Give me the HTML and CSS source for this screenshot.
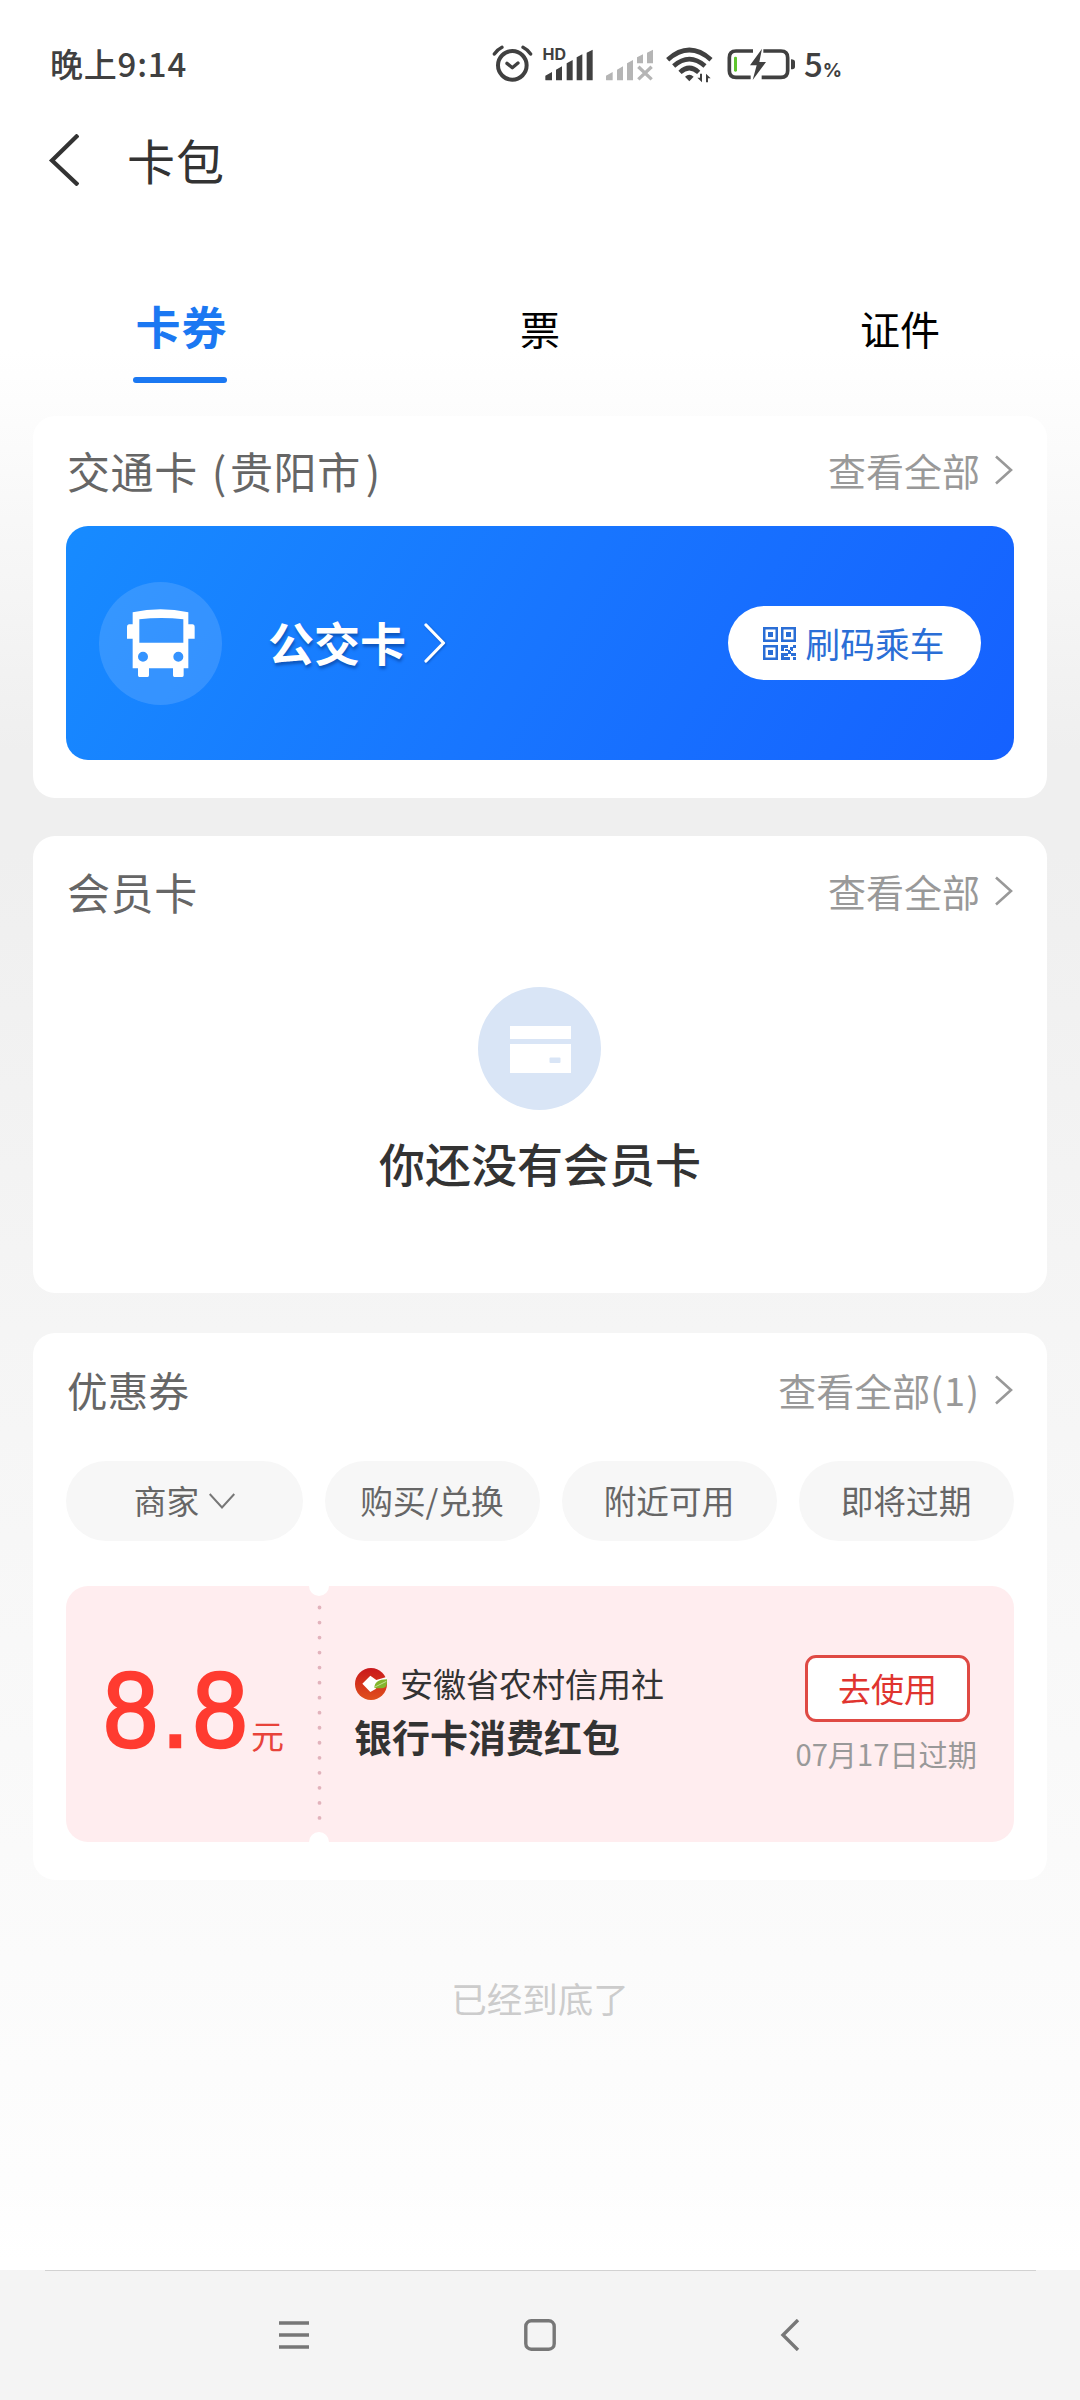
FILE: index.html
```html
<!DOCTYPE html>
<html lang="zh-CN">
<head>
<meta charset="utf-8">
<title>卡包</title>
<link rel="stylesheet" href="styles.css">
</head>
<body>
<div class="screen">
  <header class="status">
    <span class="status-time">晚上9:14</span>
    <svg class="ic-alarm" viewBox="66 72 124 116" width="41.3" height="38.7" fill="none" stroke="#404040" stroke-linecap="round">
      <circle cx="127" cy="136" r="43" stroke-width="12"/>
      <path d="M111 130l16 13 17-14" stroke-width="10" stroke-linejoin="round"/>
      <path d="M73 102Q82 89 96 82M182 102Q173 89 159 82" stroke-width="10"/>
    </svg>
    <span class="signal">
      <span class="hd">HD</span>
      <svg viewBox="222 86 150 98" width="50" height="32.7" fill="#404040">
        <path d="M226 166l20-11v25h-18q-2 0-2-2zM258 148l18-10v42h-18zM290 129l18-10v61h-18zM320 111l17-9v78h-17zM350 97l18-9v92h-18z"/>
      </svg>
    </span>
    <svg class="ic-nosim" viewBox="404 86 150 98" width="50" height="32.7" fill="#b5b5b5">
      <path d="M407 166l20-11v25h-18q-2 0-2-2zM440 148l18-10v42h-18zM470 129l18-10v61h-18zM500 111l18-9v27h-18zM530 97l18-9v41h-18z"/>
      <path d="M504 139l40 38M544 139l-40 38" stroke="#b5b5b5" stroke-width="10"/>
    </svg>
    <svg class="ic-wifi" viewBox="584 80 144 110" width="48" height="36.7" fill="none" stroke="#404040">
      <path d="M592 118Q657 60 722 118" stroke-width="14"/>
      <path d="M610 137Q657 96 704 137" stroke-width="14"/>
      <path d="M629 156Q657 130 685 156" stroke-width="14"/>
      <path d="M644 169q13-12 26 0l-13 14z" fill="#404040" stroke="none"/>
      <path d="M695 160v26l-14-14h8v-12zM707 186v-26l14 14h-8v12z" fill="#404040" stroke="none"/>
    </svg>
    <svg class="ic-battery" viewBox="768 80 210 104" width="70" height="34.7" fill="none">
      <path d="M849 92H798q-20 0-20 20v39q0 20 20 20h44M880 92h53q20 0 20 20v39q0 20-20 20h-58" stroke="#404040" stroke-width="11"/>
      <path d="M963 117q12 0 12 8v14q0 8-12 8z" fill="#404040"/>
      <rect x="792" y="109" width="9" height="45" rx="4" fill="#5fc52e"/>
      <path d="M876 85l-36 50h20l-12 44 40-54h-20z" fill="#404040"/>
    </svg>
    <span class="percent">5<small>%</small></span>
  </header>

  <div class="titlebar">
    <svg viewBox="0 0 32 52" width="32" height="52" fill="none" stroke="#333" stroke-width="4.2"><path d="M31 1L5 26.500l26 24.500"/></svg>
    <h1>卡包</h1>
  </div>

  <nav class="tabs">
    <a class="tab active">卡券</a>
    <a class="tab">票</a>
    <a class="tab">证件</a>
  </nav>

  <main>
    <section class="card transit">
      <div class="card-head">
        <h2>交通卡<span class="po">(</span>贵阳市<span class="pc">)</span></h2>
        <a class="more">查看全部<svg class="chev" viewBox="0 0 20 30" width="20" height="30"><path d="M2 1.500L17 15 2 28.500"/></svg></a>
      </div>
      <div class="banner">
        <span class="bus">
          <svg viewBox="232 296 204 206" width="68" height="68.700" fill="#fff" fill-rule="evenodd">
            <path d="M249 306q84-18 167 0v36h12q7 0 7 8v35h-19v89h-14v21q0 5-5 5h-22q-5 0-5-5v-21h-72v21q0 5-5 5h-23q-5 0-5-5v-21h-16v-89h-17v-35q0-8 7-8h10zM269 327v70h132v-70q-66-8-132 0zM265 439a15 15 0 1 0 30 0a15 15 0 1 0-30 0zM371 439a15 15 0 1 0 30 0a15 15 0 1 0-30 0z"/>
          </svg>
        </span>
        <span class="bus-name">公交卡</span>
        <svg class="bus-chev" viewBox="0 0 24 40" width="24" height="40"><path d="M3 2l17.500 18L3 38" fill="none" stroke="#fff" stroke-width="3.200" stroke-linecap="round" stroke-linejoin="round"/></svg>
        <a class="scan">
          <svg viewBox="0 0 33 33" width="33" height="33" fill="#2a6ed6" fill-rule="evenodd">
            <path d="M0 0h15v15H0zM2.500 2.500v10h10v-10zM5 5h5v5H5zM18 0h15v15H18zM20.500 2.500v10h10v-10zM23 5h5v5h-5zM0 18h15v15H0zM2.500 20.500v10h10v-10zM5 23h5v5H5z"/>
            <path d="M18 18h7v3h-4v3h-3zM27 20h3v-2h3v3h-3v3h-3zM18 26h7v3h-4v1h6v3h-9zM25 23h3v3h5v3h-5v-2h-3zM30 30h3v3h-3zM22 22h3v2h-3z"/>
          </svg>
          <span>刷码乘车</span>
        </a>
      </div>
    </section>

    <section class="card member">
      <div class="card-head">
        <h2>会员卡</h2>
        <a class="more">查看全部<svg class="chev" viewBox="0 0 20 30" width="20" height="30"><path d="M2 1.500L17 15 2 28.500"/></svg></a>
      </div>
      <svg class="empty-icon" viewBox="0 0 123 123" width="123" height="123">
        <circle cx="61.500" cy="61.500" r="61.500" fill="#d9e5f6"/>
        <path d="M32 39h61v13H32zM32 57h61v29H32z" fill="#fff"/>
        <rect x="71.500" y="70.500" width="11" height="5.500" rx="1" fill="#d9e5f6"/>
      </svg>
      <p class="empty-text">你还没有会员卡</p>
    </section>

    <section class="card coupons">
      <div class="card-head">
        <h2>优惠券</h2>
        <a class="more">查看全部<span class="count">(1)</span><svg class="chev" viewBox="0 0 20 30" width="20" height="30"><path d="M2 1.500L17 15 2 28.500"/></svg></a>
      </div>
      <div class="chips">
        <span class="chip wide">商家<svg viewBox="0 0 26 18" width="26" height="18" fill="none" stroke="#777" stroke-width="2"><path d="M.7 2L13 15.500 25.300 2"/></svg></span>
        <span class="chip">购买/兑换</span>
        <span class="chip">附近可用</span>
        <span class="chip">即将过期</span>
      </div>
      <div class="coupon">
        <div class="amount"><span class="num">8.8</span><span class="unit">元</span></div>
        <svg class="perforation" viewBox="0 0 20 256" width="20" height="256">
          <circle cx="10" cy="0" r="10" fill="#fff"/>
          <circle cx="10" cy="256" r="10" fill="#fff"/>
          <path d="M10.500 21.500v211" stroke="#e2b3bc" stroke-width="3.800" stroke-linecap="round" stroke-dasharray="0 15.030"/>
        </svg>
        <div class="info">
          <div class="issuer">
            <svg viewBox="0 0 96 96" width="32" height="32">
              <defs><linearGradient id="logo" x1="0" y1="0" x2="0" y2="1"><stop offset="0" stop-color="#c9181c"/><stop offset="1" stop-color="#e0501c"/></linearGradient></defs>
              <circle cx="48" cy="48" r="48" fill="url(#logo)"/>
              <path d="M22 47L46 23l18 13 30-9 2 8-20 8-14 20-16 9z" fill="#fff"/>
              <path d="M58 60q0-26 38-26 2 22-10 26-12 2-28 0z" fill="#82b62c"/>
              <path d="M58 58l36-18" stroke="#e8f2c8" stroke-width="2"/>
            </svg>
            <span>安徽省农村信用社</span>
          </div>
          <div class="coupon-name">银行卡消费红包</div>
        </div>
        <div class="action">
          <a class="use">去使用</a>
          <span class="expire">07月17日过期</span>
        </div>
      </div>
    </section>
    <p class="end">已经到底了</p>
  </main>

  <footer class="sysnav">
    <svg viewBox="0 0 32 32" width="32" height="32"><path d="M1 4h30M1 16h30M1 28h30"/></svg>
    <svg class="home" viewBox="0 0 32 32" width="32" height="32"><rect x="1.800" y="1.800" width="28.400" height="28.400" rx="5.500"/></svg>
    <svg viewBox="0 0 32 32" width="32" height="32"><path d="M24 1L9 16l15 15"/></svg>
  </footer>
</div>
</body>
</html>
```
FILE: styles.css
```css
* { box-sizing: border-box; }
body {
  margin: 0;
  font-family: "Noto Sans CJK SC", sans-serif;
  color: #333;
}
h1, h2, p { margin: 0; font-weight: 400; }
svg { display: block; flex: none; }
.screen {
  width: 1080px;
  height: 2400px;
  display: flex;
  flex-direction: column;
  overflow: hidden;
  background: linear-gradient(#fff 350px, #fdfdfd 400px, #f8f8f8 520px, #efefef 750px, #efefef 850px, #f5f5f5 1330px, #fafafa 1850px, #fdfdfd 2180px, #fff 2260px);
}

/* status bar */
.status {
  height: 110px;
  padding: 20px 0 0 50px;
  display: flex;
  align-items: flex-start;
  color: #404040;
}
.status-time {
  width: 442px;
  padding-top: 18px;
  font-size: 33px;
  line-height: 50px;
  font-weight: 500;
  letter-spacing: .8px;
  white-space: nowrap;
}
.ic-alarm { margin-top: 24px; }
.signal {
  display: grid;
  width: 50px;
  margin: 28.700px 0 0 10.700px;
}
.signal > * { grid-area: 1 / 1; }
.hd {
  margin: -3px 0 0 -1.500px;
  font: 700 16px/16px Inter, sans-serif;
  justify-self: start;
}
.ic-nosim { margin: 28.700px 0 0 10.700px; }
.ic-wifi { margin: 26.700px 0 0 10px; }
.ic-battery { margin: 26.700px 0 0 13.300px; }
.percent {
  margin: 20px 0 0 8px;
  font-size: 33px;
  line-height: 46px;
  font-weight: 500;
}
.percent small { font: 700 19px/20px Inter, sans-serif; }

/* title bar */
.titlebar {
  height: 170px;
  padding: 24px 0 0 47px;
  display: flex;
  align-items: flex-start;
  gap: 48px;
}
.titlebar h1 {
  font-size: 48px;
  line-height: 51px;
  letter-spacing: 1px;
}

/* tabs */
.tabs {
  height: 136px;
  padding-top: 19px;
  display: grid;
  grid-template-columns: 360px 360px 360px;
}
.tab {
  justify-self: center;
  font-size: 40px;
  line-height: 58px;
  color: #000;
}
.tab.active {
  display: flex;
  flex-direction: column;
  align-items: center;
  font-size: 45px;
  font-weight: 700;
  line-height: 54px;
  letter-spacing: 1px;
  text-indent: 3px;
  color: #1b78f2;
}
.tab.active::after {
  content: "";
  width: 94px;
  height: 6px;
  margin-top: 24px;
  border-radius: 3px;
  background: #1b78f2;
}

/* cards */
main { flex: 1; padding: 0 33px; }
.card {
  padding: 0 33px;
  background: #fff;
  border-radius: 22px;
}
.card-head {
  display: flex;
  justify-content: space-between;
  align-items: flex-start;
}
.card h2 {
  padding-left: 1px;
  font-size: 43px;
  line-height: 60px;
  letter-spacing: .6px;
  color: #666;
}
.more {
  display: flex;
  align-items: center;
  font-size: 38px;
  line-height: 60px;
  color: #999;
}
.chev {
  margin-left: 14px;
  fill: none;
  stroke: #999;
  stroke-width: 2.600;
}
.transit { height: 382px; padding-top: 24px; }
.transit .card-head { height: 86px; }
.po { margin-left: 14px; margin-right: 3px; }
.pc { margin-left: 5px; }
.banner {
  height: 234px;
  padding: 0 33px;
  border-radius: 22px;
  display: flex;
  align-items: center;
  background: linear-gradient(120deg, #178bff, #1875ff 50%, #1561ff);
}
.bus {
  width: 123px;
  height: 123px;
  border-radius: 50%;
  background: rgba(255, 255, 255, .13);
  display: grid;
  place-items: center;
}
.bus-name {
  margin: -4px 0 0 46px;
  font-size: 46px;
  line-height: 54px;
  font-weight: 700;
  color: #fff;
  text-shadow: 1px 3px 3px rgba(0, 40, 110, .45);
}
.bus-chev { margin-left: 17px; filter: drop-shadow(1px 1px 1px rgba(0, 40, 110, .4)); }
.scan {
  margin-left: auto;
  width: 253px;
  height: 74px;
  border-radius: 37px;
  background: #fff;
  color: #2a6ed6;
  display: flex;
  align-items: center;
  justify-content: center;
  gap: 10px;
  font-size: 34.700px;
  line-height: 50px;
}
.scan svg { margin-left: -2px; }
.member {
  height: 457px;
  margin-top: 38px;
  padding-top: 25px;
}
.empty-icon { margin: 66px auto 0; transform: translateX(-1px); }
.empty-text {
  margin-top: 22px;
  text-align: center;
  font-size: 46px;
  line-height: 60px;
  font-weight: 500;
}
.coupons {
  height: 547px;
  margin-top: 40px;
  padding-top: 27px;
}
.coupons h2 { font-size: 40.500px; letter-spacing: .2px; }
.count { letter-spacing: 1px; }
.chips {
  margin-top: 41px;
  display: flex;
  justify-content: space-between;
}
.chip {
  width: 215px;
  height: 80px;
  padding: 0 1px 3px 0;
  border-radius: 40px;
  background: #f7f7f7;
  color: #666;
  display: flex;
  align-items: center;
  justify-content: center;
  font-size: 32.700px;
}
.chip.wide { width: 237px; padding-right: 0; }
.chip svg { margin: 3px 0 0 10px; }

/* coupon */
.coupon {
  height: 256px;
  margin-top: 45px;
  border-radius: 22px;
  background: #ffedef;
  display: flex;
  align-items: flex-start;
}
.amount {
  width: 243px;
  padding: 65px 0 0 37px;
  display: flex;
  color: #ff3b30;
}
.num {
  width: 148px;
  font: 400 108px/118px "Liberation Sans", sans-serif;
  -webkit-text-stroke: 2.500px #ff3b30;
  letter-spacing: 3.600px;
  transform: scaleX(.92);
  transform-origin: 0 0;
}
.unit {
  padding-top: 63px;
  font-size: 33px;
  line-height: 42px;
  color: #e8433a;
}
.info { padding: 76px 0 0 26px; }
.issuer {
  display: flex;
  align-items: center;
  gap: 13px;
  font-size: 33px;
  line-height: 44px;
}
.issuer span { margin-top: -1px; }
.coupon-name {
  margin-left: -1px;
  font-size: 38px;
  line-height: 62px;
  font-weight: 700;
}
.action {
  margin-left: auto;
  padding: 69px 37px 0 0;
  display: flex;
  flex-direction: column;
  align-items: flex-end;
}
.use {
  width: 165px;
  height: 67px;
  margin-right: 7px;
  border: 3px solid #df4a44;
  border-radius: 11px;
  background: #fff;
  color: #e0342f;
  font-size: 33px;
  line-height: 61px;
  text-align: center;
}
.expire {
  margin-top: 11px;
  font-size: 29.200px;
  line-height: 40px;
  color: #999;
}
.end {
  margin-top: 88px;
  text-align: center;
  font-size: 35.500px;
  line-height: 60px;
  color: #ccc;
}

/* system navigation */
.sysnav {
  height: 130px;
  padding: 49px 274px 0 278px;
  display: flex;
  justify-content: space-between;
  background: linear-gradient(#d2d2d2, #d2d2d2) 45px 0 / 991px 1px no-repeat #f4f4f4;
}
.sysnav svg { fill: none; stroke: #777; stroke-width: 3.400; }
.sysnav .home { margin-right: 4px; }
```
